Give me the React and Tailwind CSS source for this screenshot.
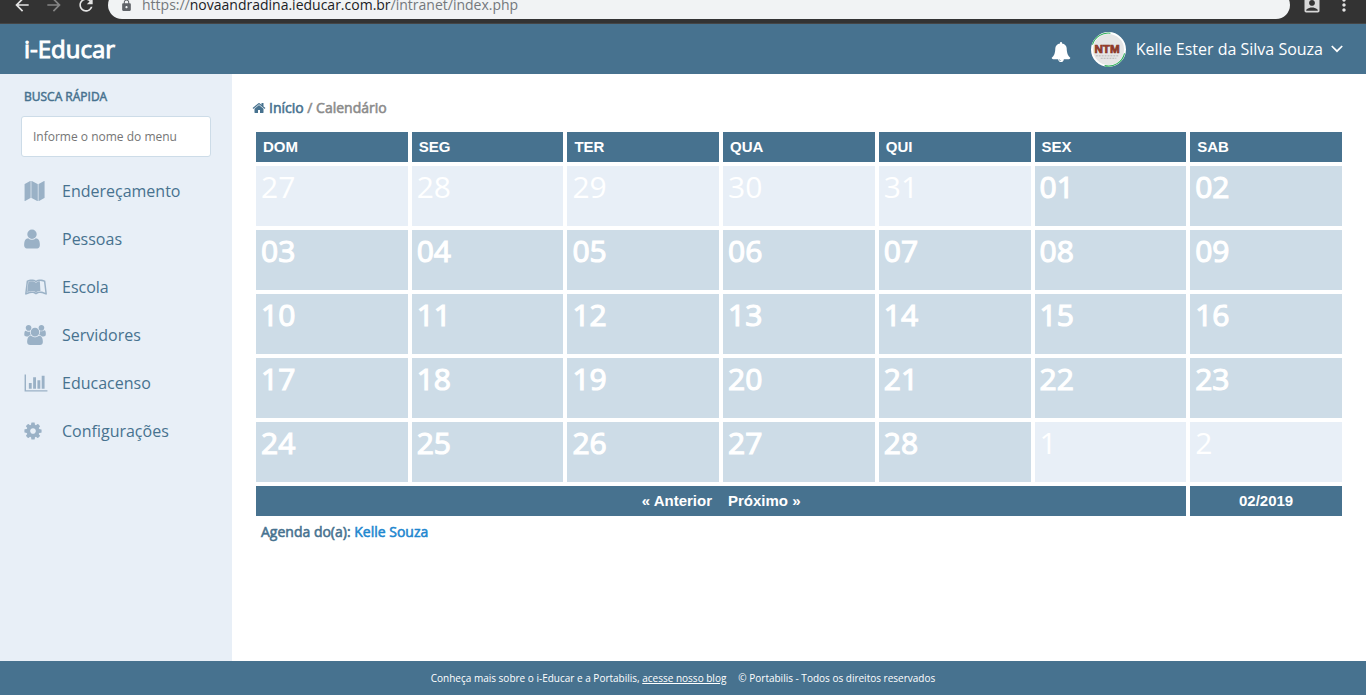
import React from "react";
import { FaLeanpub } from "react-icons/fa";
import { MdArrowBack, MdArrowForward, MdRefresh, MdLock, MdAccountBox, MdMoreVert } from "react-icons/md";

const glyphs = {
  home: {
    box: "0 0 1792 1792",
    d: "M1472 992v480q0 26-19 45t-45 19h-384v-384h-256v384h-384q-26 0-45-19t-19-45v-480q0-1 .5-3t.5-3l575-474 575 474q1 2 1 6zm223-69l-62 74q-8 9-21 11h-3q-13 0-21-7l-692-577-692 577q-12 8-24 7-13-2-21-11l-62-74q-8-10-7-23.5t11-21.5l719-599q32-26 76-26t76 26l244 204v-195q0-14 9-23t23-9h192q14 0 23 9t9 23v408l219 182q10 8 11 21.5t-7 23.5z",
  },
  map: {
    box: "0 0 2048 1792",
    d: "M512 0q13 0 22.500 9.500t9.500 22.500v1472q0 20-17 28l-480 256q-7 4-15 4-13 0-22.500-9.500t-9.500-22.500v-1472q0-20 17-28l480-256q7-4 15-4zm1248 0q13 0 22.500 9.500t9.500 22.500v1472q0 20-17 28l-480 256q-7 4-15 4-13 0-22.500-9.500t-9.500-22.500v-1472q0-20 17-28l480-256q7-4 15-4zm-1120 0q8 0 14 3l512 256q18 10 18 29v1472q0 13-9.500 22.500t-22.500 9.500q-8 0-14-3l-512-256q-18-10-18-29v-1472q0-13 9.500-22.500t22.500-9.500z",
  },
  user: {
    box: "256 0 1280 1792",
    d: "M1536 1399q0 109-62.5 187t-150.5 78h-854q-88 0-150.5-78t-62.5-187q0-85 8.5-160.5t31.5-152 58.5-131 94-89 134.500-34.5q131 128 313 128t313-128q76 0 134.500 34.500t94 89 58.500 131 31.500 152 8.500 160.500zm-256-887q0 159-112.500 271.500t-271.500 112.500-271.500-112.500-112.500-271.500 112.500-271.500 271.500-112.500 271.500 112.500 112.500 271.500z",
  },
  users: {
    box: "-64 0 1920 1792",
    d: "M529 896q-162 5-265 128h-134q-82 0-138-40.5t-56-118.5q0-353 124-353 6 0 43.5 21t97.5 42.5 119 21.5q67 0 133-23-5 37-5 66 0 159 93 293zm1071 637q0 120-73 189.5t-194 69.5h-874q-121 0-194-69.5t-73-189.5q0-53 3.5-103.5t14-109 26.5-108.5 43-97.5 62-81 85.5-53.5 111.5-20q10 0 43 21.5t73 48 107 48 135 21.5 135-21.5 107-48 73-48 43-21.5q61 0 111.5 20t85.5 53.5 62 81 43 97.5 26.5 108.5 14 109 3.5 103.5zm-1024-1277q0 106-75 181t-181 75-181-75-75-181 75-181 181-75 181 75 75 181zm704 384q0 159-112.5 271.5t-271.5 112.5-271.5-112.5-112.5-271.5 112.5-271.5 271.5-112.5 271.5 112.5 112.5 271.5zm576 225q0 78-56 118.5t-138 40.5h-134q-103-123-265-128 93-134 93-293 0-29-5-66 66 23 133 23 59 0 119-21.5t97.5-42.5 43.5-21q124 0 124 353zm-128-609q0 106-75 181t-181 75-181-75-75-181 75-181 181-75 181 75 75 181z",
  },
  chart: {
    box: "0 0 2048 1792",
    d: "M640 896v512h-256v-512h256zm384-512v1024h-256v-1024h256zm1024 1152v128h-2048v-1536h128v1408h1920zm-640-896v768h-256v-768h256zm384-384v1152h-256v-1152h256z",
  },
  cog: {
    box: "128 0 1536 1792",
    d: "M1152 896q0-106-75-181t-181-75-181 75-75 181 75 181 181 75 181-75 75-181zm512-109v222q0 12-8 23t-20 13l-185 28q-19 54-39 91 35 50 107 138 10 12 10 25t-9 23q-27 37-99 108t-94 71q-12 0-26-9l-138-108q-44 23-91 38-16 136-29 186-7 28-36 28h-222q-14 0-24.5-8.5t-11.5-21.5l-28-184q-49-16-90-37l-141 107q-10 9-25 9-14 0-25-11-126-114-165-168-7-10-7-23 0-12 8-23 15-21 51-66.5t54-70.5q-27-50-41-99l-183-27q-13-2-21-12.5t-8-23.5v-222q0-12 8-23t19-13l186-28q14-46 39-92-40-57-107-138-10-12-10-24 0-10 9-23 26-36 98.5-107.5t94.5-71.5q13 0 26 10l138 107q44-23 91-38 16-136 29-186 7-28 36-28h222q14 0 24.5 8.5t11.5 21.5l28 184q49 16 90 37l142-107q9-9 24-9 13 0 25 10 129 119 165 170 7 8 7 22 0 12-8 23-15 21-51 66.5t-54 70.5q26 50 41 98l183 28q13 2 21 12.5t8 23.5z",
  },
  bell: {
    box: "0 0 1792 1792",
    d: "M912 1696q0-16-16-16-59 0-101.5-42.5t-42.5-101.5q0-16-16-16t-16 16q0 73 51.5 124.5t124.5 51.5q16 0 16-16zm816-288q0 52-38 90t-90 38h-448q0 106-75 181t-181 75-181-75-75-181h-448q-52 0-90-38t-38-90q50-42 91-88t85-119.5 74.5-158.5 50-206 19.5-260q0-152 117-282.5t307-158.5q-8-19-8-39 0-40 28-68t68-28 68 28 28 68q0 20-8 39 190 28 307 158.5t117 282.5q0 139 19.5 260t50 206 74.5 158.5 85 119.5 91 88z",
  },
};

function Glyph({ name, className }) {
  return (
    <svg viewBox={glyphs[name].box} className={className} fill="currentColor" aria-hidden="true">
      <path d={glyphs[name].d} />
    </svg>
  );
}

const menu = [
  { label: "Endereçamento", icon: <Glyph name="map" className="h-5 w-6" /> },
  { label: "Pessoas", icon: <Glyph name="user" className="h-[22px] w-4" /> },
  { label: "Escola", icon: <FaLeanpub className="h-5 w-6" /> },
  { label: "Servidores", icon: <Glyph name="users" className="h-5 w-[22px]" /> },
  { label: "Educacenso", icon: <Glyph name="chart" className="h-5 w-6" /> },
  { label: "Configurações", icon: <Glyph name="cog" className="h-5 w-[18px]" /> },
];

const days = ["DOM", "SEG", "TER", "QUA", "QUI", "SEX", "SAB"];
const pad = (n) => String(n).padStart(2, "0");
const cells = [
  ...[27, 28, 29, 30, 31].map((n) => ({ text: String(n), out: true })),
  ...Array.from({ length: 28 }, (_, i) => ({ text: pad(i + 1), out: false })),
  ...[1, 2].map((n) => ({ text: String(n), out: true })),
];
const weeks = [0, 1, 2, 3, 4].map((w) => cells.slice(w * 7, w * 7 + 7));

function BrowserBar() {
  return (
    <div className="flex h-6 items-end overflow-hidden border-b border-[#454545] bg-[#333333] pb-1 pl-3 pr-3">
      <div className="flex h-7 w-full items-center">
        <button aria-label="Voltar" className="text-[#e4e4e4]"><MdArrowBack size={20} /></button>
        <button aria-label="Avançar" className="ml-3 text-[#858585]"><MdArrowForward size={20} /></button>
        <button aria-label="Recarregar" className="ml-3 text-[#e4e4e4]"><MdRefresh size={20} /></button>
        <div className="ml-3 flex h-7 flex-1 items-center rounded-full bg-[#f1f3f4] pl-3 text-[#5f6368]">
          <MdLock size={13} />
          <span className="ml-[9px] text-sm leading-5 text-[#74787c]">
            https://<span className="text-[#202124]">novaandradina.ieducar.com.br</span>/intranet/index.php
          </span>
        </div>
        <button aria-label="Perfil" className="ml-3 text-[#d8d8d8]"><MdAccountBox size={20} /></button>
        <button aria-label="Menu do navegador" className="ml-3 text-[#e4e4e4]"><MdMoreVert size={20} /></button>
      </div>
    </div>
  );
}

function Avatar() {
  return (
    <svg viewBox="0 0 36 36" className="h-[35px] w-[35px]" role="img" aria-label="NTM">
      <circle cx="18" cy="18" r="17" fill="#e6e6e6" stroke="#fff" strokeWidth="2" />
      <path d="M1.500 13A17 17 0 0 1 20 1.200M34.500 22A17 17 0 0 1 14 34.600" fill="none" stroke="#2fae5a" strokeWidth="1.100" />
      <text x="16.500" y="21.500" textAnchor="middle" className="font-['Liberation_Sans',sans-serif] text-[12px] font-bold" fill="#a5442f" stroke="#7e2f20" strokeWidth=".7">NTM</text>
      <path d="M5 24.500h23M10 27h16" stroke="#b5b5b5" strokeWidth="1" strokeDasharray="2 1" />
    </svg>
  );
}

export default function App() {
  return (
    <div className="flex min-h-screen flex-col bg-white font-['Open_Sans',sans-serif] text-[#47728f]">
      <BrowserBar />
      <header className="flex h-[50px] items-center justify-between bg-[#47728f] pl-6 pr-[23px] text-white">
        <a href="#inicio" className="text-2xl [-webkit-text-stroke:0.04em]">i-Educar</a>
        <div className="flex items-center">
          <button aria-label="Notificações" className="pt-1.5"><Glyph name="bell" className="h-5 w-5" /></button>
          <span className="ml-5"><Avatar /></span>
          <button className="ml-2.5 flex items-center gap-2 text-base">
            Kelle Ester da Silva Souza
            <svg viewBox="0 0 12 8" className="h-2 w-3" fill="none" stroke="currentColor" strokeWidth="1.700" aria-hidden="true">
              <path d="M.8 1l5.200 5.200L11.200 1" />
            </svg>
          </button>
        </div>
      </header>

      <div className="flex flex-1">
        <aside className="w-[232px] shrink-0 bg-[#e8eff7] px-[21px] pt-[13px]">
          <label htmlFor="busca" className="block pl-[3px] text-xs leading-5 [-webkit-text-stroke:0.04em]">BUSCA RÁPIDA</label>
          <input
            id="busca"
            placeholder="Informe o nome do menu"
            className="mt-[9px] block h-[41px] w-full rounded-[3px] border border-[#cddce8] bg-white px-[11px] text-xs placeholder:text-[#757575]"
          />
          <nav className="mt-2.5">
            {menu.map((m) => (
              <a key={m.label} href="#menu" className="flex h-12 items-center pl-[3px] text-base">
                <span className="w-[38px] text-[#9ab1c6]">{m.icon}</span>
                {m.label}
              </a>
            ))}
          </nav>
        </aside>

        <main className="min-w-0 flex-1 px-5 pt-6">
          <div className="flex items-center gap-[3px] text-sm leading-5 text-[#8b8b8b]">
            <Glyph name="home" className="h-3.5 w-3.5 text-[#47728f]" />
            <span className="[-webkit-text-stroke:0.04em]">
              <a href="#inicio" className="text-[#47728f]">Início</a> / Calendário
            </span>
          </div>
          <table className="mt-2.5 w-full table-fixed border-separate border-spacing-1">
            <thead>
              <tr>
                {days.map((d) => (
                  <th key={d} className="h-[30px] bg-[#47728f] px-[7px] py-0 text-left font-['Liberation_Sans',sans-serif] text-[15px] leading-5 font-bold text-white">{d}</th>
                ))}
              </tr>
            </thead>
            <tbody>
              {weeks.map((week, i) => (
                <tr key={i}>
                  {week.map((c, j) => (
                    <td key={j} className={c.out ? "h-[60px] bg-[#e8eff7] px-[5px] py-0 align-top text-3xl leading-[42px] text-white" : "h-[60px] bg-[#cddce7] px-[5px] py-0 align-top text-3xl leading-[42px] text-white [-webkit-text-stroke:0.04em]"}>{c.text}</td>
                  ))}
                </tr>
              ))}
            </tbody>
            <tfoot className="text-center font-['Liberation_Sans',sans-serif] text-[15px] leading-5 font-bold text-white">
              <tr>
                <td colSpan={6} className="h-[30px] bg-[#47728f] p-0">
                  <a href="#anterior">« Anterior</a>
                  <a href="#proximo" className="ml-4">Próximo »</a>
                </td>
                <td className="h-[30px] bg-[#47728f] p-0">02/2019</td>
              </tr>
            </tfoot>
          </table>
          <p className="pl-[9px] text-sm leading-6 [-webkit-text-stroke:0.04em]">
            Agenda do(a): <a href="#agenda" className="text-[#1f87cf]">Kelle Souza</a>
          </p>
        </main>
      </div>

      <footer className="flex h-[34px] items-center justify-center gap-3 bg-[#47728f] text-[10px] text-white">
        <span>Conheça mais sobre o i-Educar e a Portabilis, <a href="#blog" className="underline">acesse nosso blog</a></span>
        <span>© Portabilis - Todos os direitos reservados</span>
      </footer>
    </div>
  );
}
